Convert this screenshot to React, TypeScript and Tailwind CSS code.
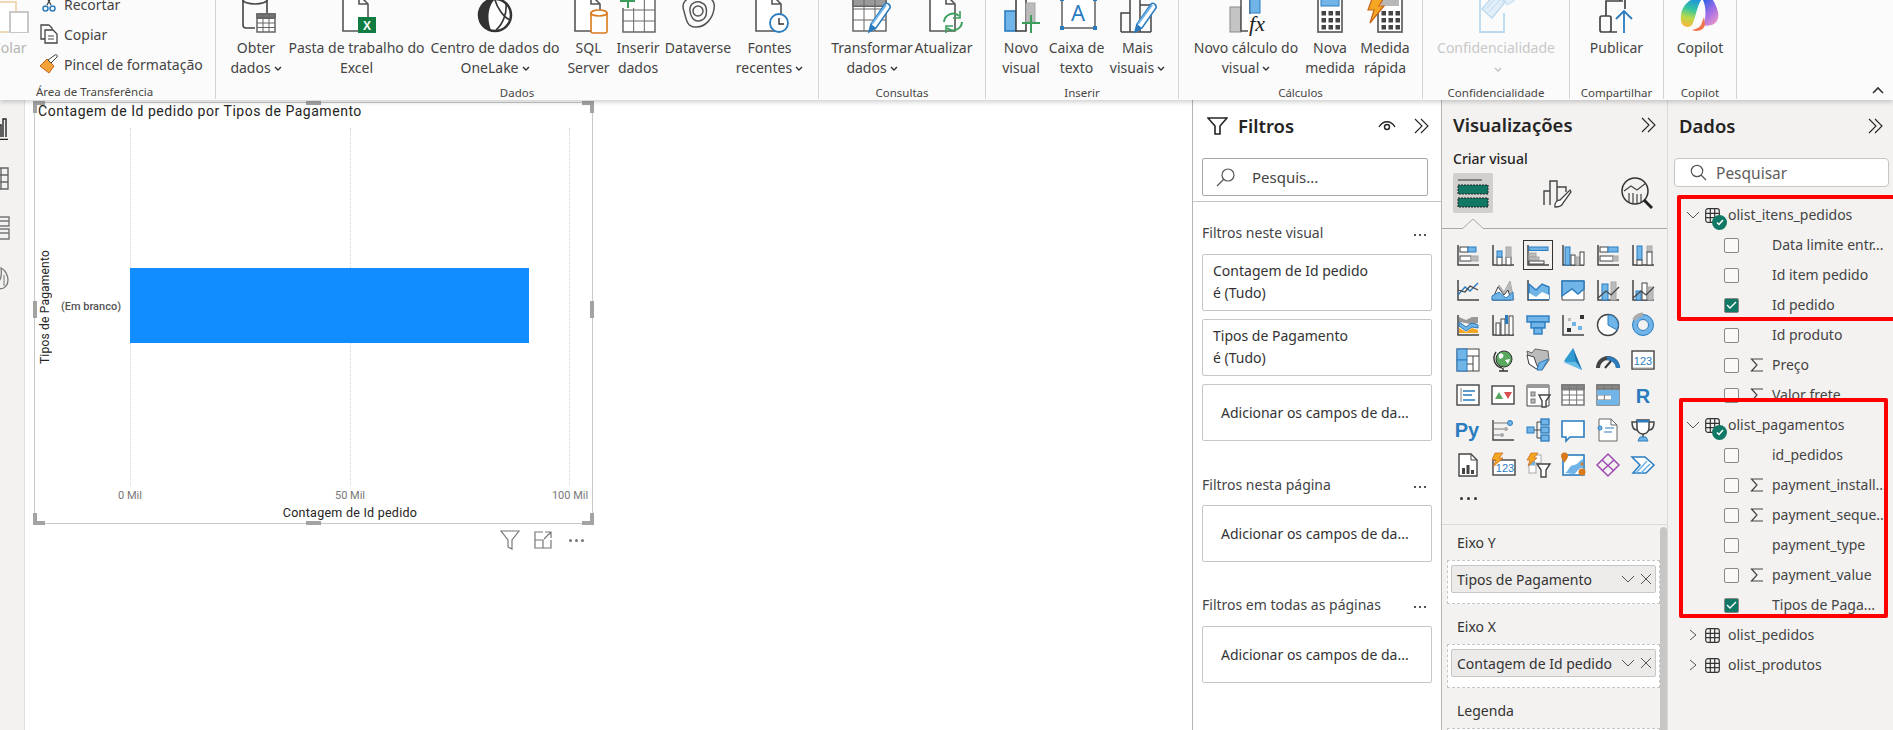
import React from "react";

const DK = "#444444";
const BL = "#2b7cbf";
const LB = "#71b4e8";
const GR = "#a8a8a8";

const Svg40 = ({ children }: { children: React.ReactNode }) => (
	<svg width="40" height="40" viewBox="0 0 40 40" fill="none" className="block overflow-visible">
		{children}
	</svg>
);

const Grid = ({ x, y, w, h, c, r, color = "#666", head }: { x: number; y: number; w: number; h: number; c: number; r: number; color?: string; head?: string }) => (
	<g stroke={color} strokeWidth="1.5">
		<rect x={x} y={y} width={w} height={h} fill="#fff" />
		{head && <rect x={x} y={y} width={w} height={h / (r + 1)} fill={head} />}
		{Array.from({ length: c - 1 }).map((_, i) => (
			<path key={i} d={`M${x + (w * (i + 1)) / c} ${y}V${y + h}`} strokeWidth="1" />
		))}
		{Array.from({ length: r - 1 }).map((_, i) => (
			<path key={i} d={`M${x} ${y + (h * (i + 1)) / r}H${x + w}`} strokeWidth="1" />
		))}
	</g>
);

const Doc = () => <path d="M6 2H22L31 11V38H6Z M22 2V11H31" stroke="#555" strokeWidth="1.6" fill="#fff" />;

const Pen = () => (
	<g>
		<path d="M17 39L19 31L33 11C35 9 39 12 38 15L24 35Z" fill="#fff" stroke={BL} strokeWidth="1.6" />
		<path d="M17 39L19 31L24 35Z" fill={BL} />
		<path d="M20 31L34 12" stroke={LB} strokeWidth="2" />
	</g>
);

const IconObter = () => (
	<Svg40>
		<path d="M7 7V32a3 3 0 0 0 3 3H19M31 7V20" stroke={DK} strokeWidth="1.6" />
		<ellipse cx="19" cy="7" rx="12" ry="4" stroke={DK} strokeWidth="1.6" />
		<Grid x={21} y={21} w={18} h={18} c={3} r={4} head="#777" />
	</Svg40>
);
const IconExcel = () => (
	<Svg40>
		<Doc />
		<rect x="21" y="24" width="18" height="16" fill="#107c41" />
		<text x="30" y="37" textAnchor="middle" fontSize="12" fontWeight="700" fill="#fff" fontFamily="Liberation Sans">X</text>
	</Svg40>
);
const IconOneLake = () => (
	<Svg40>
		<circle cx="20" cy="22" r="16" fill="#fff" stroke="#333" strokeWidth="2.5" />
		<path d="M5 26C2 16 10 6 20 6C14 12 11 24 16 37C11 36 7 32 5 26Z" fill="#333" />
		<path d="M20 7C22 14 28 24 35 27M31 11C32 20 28 31 21 37" stroke="#333" strokeWidth="1.6" />
	</Svg40>
);
const IconSql = () => (
	<Svg40>
		<Doc />
		<rect x="22" y="19" width="16" height="21" rx="2" fill="#fff" stroke="#d97a1f" strokeWidth="1.6" />
		<ellipse cx="30" cy="20" rx="8" ry="3" fill="#fff" stroke="#d97a1f" strokeWidth="1.6" />
	</Svg40>
);
const IconInserir = () => (
	<Svg40>
		<Grid x={5} y={6} w={32} h={33} c={3} r={3} />
		<rect x="1" y="3" width="16" height="12" fill="#fbfbfb" />
		<path d="M10 0V15M2 8H17" stroke="#3b9e5a" strokeWidth="2" />
	</Svg40>
);
const IconDataverse = () => (
	<Svg40>
		<path d="M6 18C2 8 12 2 20 5C28 0 38 6 36 16C35 24 28 35 17 34C9 34 8 26 6 18Z" stroke="#555" strokeWidth="1.5" />
		<path d="M12 18C11 10 19 7 24 10C30 12 30 24 24 27C18 30 13 26 12 18Z" stroke="#555" strokeWidth="1.5" />
		<circle cx="20" cy="18" r="5" stroke="#555" strokeWidth="1.5" />
	</Svg40>
);
const IconFontes = () => (
	<Svg40>
		<Doc />
		<circle cx="29" cy="30" r="9" fill="#fff" stroke={BL} strokeWidth="1.8" />
		<path d="M29 25V31H34" stroke="#333" strokeWidth="1.4" />
	</Svg40>
);
const IconTransformar = () => (
	<Svg40>
		<Grid x={1} y={5} w={33} h={33} c={3} r={3} head="#9a9a9a" />
		<Pen />
	</Svg40>
);
const IconAtualizar = () => (
	<Svg40>
		<Doc />
		<path d="M20 29A9 9 0 0 1 35 23M38 29A9 9 0 0 1 23 35" fill="none" stroke="#3b9e5a" strokeWidth="2" />
		<path d="M36 18V25H29M22 40V33H29" fill="none" stroke="#3b9e5a" strokeWidth="1.6" />
	</Svg40>
);
const IconNovoVisual = () => (
	<Svg40>
		<rect x="4" y="18" width="11" height="20" fill={LB} stroke={BL} strokeWidth="1.6" />
		<rect x="15" y="4" width="10" height="34" fill="#fff" stroke={DK} strokeWidth="1.6" />
		<rect x="25" y="10" width="9" height="19" fill="#bbb" stroke={GR} />
		<path d="M30 22V40M21 30H39" stroke="#3b9e5a" strokeWidth="2" />
	</Svg40>
);
const IconCaixa = () => (
	<Svg40>
		<rect x="5" y="6" width="33" height="29" fill="#fff" stroke="#555" strokeWidth="1.4" />
		<rect x="3" y="4" width="4" height="4" fill={BL} />
		<rect x="36" y="4" width="4" height="4" fill={BL} />
		<rect x="3" y="33" width="4" height="4" fill={BL} />
		<rect x="36" y="33" width="4" height="4" fill={BL} />
		<text x="21" y="28" textAnchor="middle" fontSize="22" fill={BL} fontFamily="Noto Sans">A</text>
	</Svg40>
);
const IconMais = () => (
	<Svg40>
		<path d="M3 39V20H12V39M12 39V5H22V39M22 39V12H33V39M3 39H33" stroke={DK} strokeWidth="1.5" />
		<Pen />
	</Svg40>
);
const IconCalculo = () => (
	<Svg40>
		<rect x="4" y="14" width="11" height="25" fill="#c4c4c4" stroke="#8a8a8a" />
		<rect x="15" y="2" width="9" height="36" fill="#fff" stroke={DK} strokeWidth="1.4" />
		<rect x="24" y="4" width="10" height="16" fill={LB} stroke={BL} />
		<rect x="22" y="21" width="18" height="19" fill="#fbfbfb" />
		<text x="31" y="38" textAnchor="middle" fontSize="22" fontStyle="italic" fill="#222" fontFamily="Liberation Serif">fx</text>
	</Svg40>
);
const Keys = ({ x, y }: { x: number; y: number }) => (
	<g fill="#444">
		{[0, 1, 2].map((r) =>
			[0, 1, 2].map((c) => <rect key={`${r}${c}`} x={x + c * 7} y={y + r * 7} width="4.5" height="4.5" />)
		)}
	</g>
);
const IconMedida = () => (
	<Svg40>
		<rect x="8" y="1" width="24" height="38" fill="#fff" stroke="#666" strokeWidth="1.8" />
		<rect x="11" y="6" width="18" height="7" fill={LB} stroke={BL} />
		<Keys x={11.5} y={18} />
	</Svg40>
);
const IconRapida = () => (
	<Svg40>
		<rect x="13" y="1" width="24" height="38" fill="#fff" stroke="#666" strokeWidth="1.8" />
		<rect x="16" y="6" width="18" height="7" fill="#b8b8b8" />
		<Keys x={16.5} y={18} />
		<path d="M8 3H20L14 13H19L5 30L9 17H3Z" fill="#f5a623" stroke="#c8641a" strokeWidth="1.2" />
	</Svg40>
);
const IconConfid = () => (
	<Svg40>
		<path d="M4 2V39H28V20" stroke="#bcd9ee" strokeWidth="1.8" fill="#fbfbfb" />
		<path d="M6 16L19 1L29 9L16 25Z" fill="#e3eff8" stroke="#bcd9ee" strokeWidth="1.4" />
		<path d="M10 16L21 4M13 19L24 7" stroke="#bcd9ee" />
		<path d="M26 2L38 -1V8L31 12Z" fill="#e3eff8" stroke="#bcd9ee" />
	</Svg40>
);
const IconPublicar = () => (
	<Svg40>
		<rect x="3" y="23" width="11" height="16" rx="2" stroke={DK} strokeWidth="1.7" />
		<path d="M9 23V8H23V2M14 39H20M28 2V16M14 8H26" stroke={DK} strokeWidth="1.7" />
		<path d="M27 40V18M19 26L27 18L35 26" stroke={BL} strokeWidth="1.8" />
	</Svg40>
);
const IconCopilot = () => (
	<Svg40>
		<defs>
			<linearGradient id="cp1" x1="0.6" y1="0" x2="0.4" y2="1">
				<stop offset="0" stopColor="#1f8fe0" />
				<stop offset="0.4" stopColor="#37c6a0" />
				<stop offset="0.7" stopColor="#b9d94a" />
				<stop offset="1" stopColor="#f5b83b" />
			</linearGradient>
			<linearGradient id="cp2" x1="0.2" y1="0" x2="0.8" y2="1">
				<stop offset="0" stopColor="#2a62e8" />
				<stop offset="0.5" stopColor="#a06ee6" />
				<stop offset="1" stopColor="#ef9ac8" />
			</linearGradient>
		</defs>
		<path d="M8 9C12 5 20 4 22 6C18 10 16 22 13 30C11 36 2 35 1 28C0 20 3 13 8 9Z" fill="url(#cp1)" />
		<path d="M22 5H29C32 5 34 8 36 13C39 20 40 27 34 31C30 33 26 33 23 32C26 26 27 14 22 5Z" fill="url(#cp2)" />
		<path d="M12 37C17 39 23 38 25 32L24 24L21 32C19 35 16 36 12 37Z" fill="#f2744b" />
		<path d="M18 29L23 14" stroke="#fff" strokeWidth="2.5" />
	</Svg40>
);

const Caret = ({ color = "#333" }: { color?: string }) => (
	<svg width="8" height="6" viewBox="0 0 8 6" fill="none" className="inline-block ml-[3px]">
		<path d="M1 1L4 4L7 1" stroke={color} strokeWidth="1.4" />
	</svg>
);

const RibbonButton = ({ width, icon, lines, caret }: { width: string; icon: React.ReactNode; lines: string[]; caret?: boolean }) => (
	<div className={`${width} flex flex-col items-center justify-end shrink-0`}>
		<div className="mb-[5px]">{icon}</div>
		{lines.map((l, i) => (
			<div key={i} className="h-[20px] leading-[20px] whitespace-nowrap text-[14px] text-[#444]">
				{l}
				{caret && i === lines.length - 1 && <Caret />}
			</div>
		))}
	</div>
);

const RibbonGroup = ({ width, padding, label, children }: { width: string; padding: string; label: string; children: React.ReactNode }) => (
	<div className={`${width} shrink-0 flex flex-col border-r border-[#d4d4d4] h-[99px]`}>
		<div className={`${padding} h-[84px] pb-[6px] flex items-end`}>{children}</div>
		<div className="text-center text-[11.5px] leading-[18px] text-[#484644] whitespace-nowrap">{label}</div>
	</div>
);

const Ribbon = () => (
	<div className="relative z-10 h-[100px] bg-[#fbfbfb] flex overflow-hidden shadow-[0_2px_5px_rgba(0,0,0,0.2)] shrink-0">
		<div className="w-[216px] shrink-0 flex flex-col border-r border-[#d4d4d4] h-[99px]">
			<div className="h-[84px] flex">
				<div className="w-[29px] shrink-0 flex flex-col justify-end overflow-hidden pb-[26px]">
					<svg width="29" height="33" viewBox="0 0 29 33" fill="none" className="block mb-[5px]">
						<rect x="-8" y="2" width="24" height="30" fill="#fff" stroke="#f0d9b5" strokeWidth="2" />
						<rect x="10" y="12" width="18" height="21" fill="#fff" stroke="#c8c8c8" strokeWidth="2" />
					</svg>
					<div className="text-[14px] leading-[20px] text-[#b4b4b4] whitespace-nowrap -ml-[8px]">Colar</div>
				</div>
				<div className="flex flex-col -mt-[6px] ml-[10px] gap-[10px]">
					<div className="flex items-center h-[20px] gap-[5px] text-[14px] text-[#444]">
						<svg width="20" height="20" viewBox="0 0 20 20" fill="none">
							<path d="M7 2L12 11M13 2L8 11" stroke="#444" strokeWidth="1.3" />
							<circle cx="6.5" cy="14.5" r="2.5" stroke={BL} strokeWidth="1.5" />
							<circle cx="13.5" cy="14.5" r="2.5" stroke={BL} strokeWidth="1.5" />
						</svg>
						Recortar
					</div>
					<div className="flex items-center h-[20px] gap-[5px] text-[14px] text-[#444]">
						<svg width="20" height="20" viewBox="0 0 20 20" fill="none">
							<path d="M10 1H2V15H6M10 1L13 4V6" stroke="#444" strokeWidth="1.3" />
							<path d="M6 6H14L18 10V19H6Z" fill="#fff" stroke="#444" strokeWidth="1.3" />
							<path d="M9 12H15M9 15H15" stroke="#444" />
						</svg>
						Copiar
					</div>
					<div className="flex items-center h-[20px] gap-[5px] text-[14px] text-[#444] whitespace-nowrap">
						<svg width="20" height="20" viewBox="0 0 20 20" fill="none">
							<path d="M1 12L8 5L15 12L10 19Z" fill="#f3a33a" stroke="#c8641a" />
							<path d="M9 6L12 9L18 3C19 1 17 0 16 1Z" fill="#fff" stroke="#444" />
						</svg>
						Pincel de formatação
					</div>
				</div>
			</div>
			<div className="text-center text-[11.5px] leading-[16px] text-[#484644] -ml-[26px]">Área de Transferência</div>
		</div>
		<RibbonGroup width="w-[603px]" padding="pl-[10px]" label="Dados">
			<RibbonButton width="w-[60px]" icon={<IconObter />} lines={["Obter", "dados"]} caret />
			<RibbonButton width="w-[141px]" icon={<IconExcel />} lines={["Pasta de trabalho do", "Excel"]} />
			<RibbonButton width="w-[136px]" icon={<IconOneLake />} lines={["Centro de dados do", "OneLake"]} caret />
			<RibbonButton width="w-[51px]" icon={<IconSql />} lines={["SQL", "Server"]} />
			<RibbonButton width="w-[48px]" icon={<IconInserir />} lines={["Inserir", "dados"]} />
			<RibbonButton width="w-[72px]" icon={<IconDataverse />} lines={["Dataverse", ""]} />
			<RibbonButton width="w-[71px]" icon={<IconFontes />} lines={["Fontes", "recentes"]} caret />
		</RibbonGroup>
		<RibbonGroup width="w-[167px]" padding="pl-[11px]" label="Consultas">
			<RibbonButton width="w-[84px]" icon={<IconTransformar />} lines={["Transformar", "dados"]} caret />
			<RibbonButton width="w-[59px]" icon={<IconAtualizar />} lines={["Atualizar", ""]} />
		</RibbonGroup>
		<RibbonGroup width="w-[193px]" padding="pl-[10px]" label="Inserir">
			<RibbonButton width="w-[50px]" icon={<IconNovoVisual />} lines={["Novo", "visual"]} />
			<RibbonButton width="w-[61px]" icon={<IconCaixa />} lines={["Caixa de", "texto"]} />
			<RibbonButton width="w-[61px]" icon={<IconMais />} lines={["Mais", "visuais"]} caret />
		</RibbonGroup>
		<RibbonGroup width="w-[244px]" padding="pl-[13px]" label="Cálculos">
			<RibbonButton width="w-[108px]" icon={<IconCalculo />} lines={["Novo cálculo do", "visual"]} caret />
			<RibbonButton width="w-[60px]" icon={<IconMedida />} lines={["Nova", "medida"]} />
			<RibbonButton width="w-[50px]" icon={<IconRapida />} lines={["Medida", "rápida"]} />
		</RibbonGroup>
		<RibbonGroup width="w-[147px]" padding="" label="Confidencialidade">
			<div className="w-full flex flex-col items-center justify-end">
				<div className="mb-[5px]">
					<IconConfid />
				</div>
				<div className="h-[20px] leading-[20px] text-[14px] text-[#c8c8c8]">Confidencialidade</div>
				<div className="h-[20px] leading-[20px]">
					<Caret color="#c0c0c0" />
				</div>
			</div>
		</RibbonGroup>
		<RibbonGroup width="w-[94px]" padding="" label="Compartilhar">
			<RibbonButton width="w-full" icon={<IconPublicar />} lines={["Publicar", ""]} />
		</RibbonGroup>
		<RibbonGroup width="w-[73px]" padding="" label="Copilot">
			<RibbonButton width="w-full" icon={<IconCopilot />} lines={["Copilot", ""]} />
		</RibbonGroup>
		<div className="flex-1 flex justify-end items-end pb-[6px] pr-[9px]">
			<svg width="12" height="8" viewBox="0 0 12 8" fill="none">
				<path d="M1 7L6 2L11 7" stroke="#333" strokeWidth="1.6" />
			</svg>
		</div>
	</div>
);

const Rail = () => (
	<div className="w-[25px] shrink-0 bg-[#f3f2f1] border-r border-[#e1dfdd] overflow-hidden flex flex-col pt-[16px] gap-[26px]">
		<svg width="24" height="24" viewBox="0 0 24 24" fill="none" className="-ml-[16px]">
			<path d="M14 21V9H17V21M19 21V3H22V21M12 23.500H24" stroke="#222" strokeWidth="1.4" />
		</svg>
		<svg width="24" height="24" viewBox="0 0 24 24" fill="none" className="-ml-[15px]">
			<path d="M1 2H23V23H1ZM1 9H23M1 16H23M8 2V23M16 2V23" stroke="#666" strokeWidth="1.4" />
		</svg>
		<svg width="24" height="24" viewBox="0 0 24 24" fill="none" className="-ml-[14px]">
			<path d="M13 1H23V10H13ZM13 5H23M13 13H23V23H13ZM13 17H23M2 10H10V15H2Z" stroke="#777" strokeWidth="1.4" />
		</svg>
		<svg width="24" height="24" viewBox="0 0 24 24" fill="none" className="-ml-[15px]">
			<path d="M16 2C20 4 23 9 23 14C23 19 20 23 14 23C10 22 9 19 12 17C16 15 17 8 16 2Z" stroke="#777" strokeWidth="1.3" />
			<path d="M19 9V20" stroke="#777" />
		</svg>
	</div>
);

const Handle = ({ className }: { className: string }) => <div className={`absolute bg-[#a3a3a3] ${className}`} />;

const BarChartVisual = () => (
	<div className="relative w-[559px] h-[422px] border border-[#c8c8c8] bg-white font-['Roboto',sans-serif]">
		<div className="pl-[3px] h-[25px] leading-[16px] text-[14px] tracking-[0.53px] text-[#252423] whitespace-nowrap">
			Contagem de Id pedido por Tipos de Pagamento
		</div>
		<div className="flex h-[358px]">
			<div className="w-[95px] shrink-0 flex items-center">
				<div className="w-[18px] ml-[1px] flex justify-center">
					<div className="[writing-mode:vertical-rl] rotate-180 text-[12px] leading-[14px] tracking-[0.2px] text-[#252423] whitespace-nowrap">
						Tipos de Pagamento
					</div>
				</div>
				<div className="flex-1 text-right pr-[9px] text-[11px] font-medium text-[#555] whitespace-nowrap">(Em branco)</div>
			</div>
			<div className="relative w-[440px] flex items-center pb-[3px]">
				<div className="absolute inset-0 flex justify-between">
					<div className="w-0 border-l border-dotted border-[#d4d4d4]" />
					<div className="w-0 border-l border-dotted border-[#d4d4d4]" />
					<div className="w-0 border-l border-dotted border-[#d4d4d4]" />
				</div>
				<div className="relative w-[399px] h-[75px] bg-[#118dff]" />
			</div>
		</div>
		<div className="flex justify-between w-[440px] ml-[95px] mt-[2px] text-[11px] leading-[16px] text-[#777]">
			{["0 Mil", "50 Mil", "100 Mil"].map((t) => (
				<div key={t} className="w-0 flex justify-center whitespace-nowrap">
					{t}
				</div>
			))}
		</div>
		<div className="w-[440px] ml-[95px] text-center text-[12.5px] leading-[18px] tracking-[0.25px] text-[#252423]">Contagem de Id pedido</div>

		<Handle className="-top-[2px] -left-[2px] w-[12px] h-[4px]" />
		<Handle className="-top-[2px] -left-[2px] w-[4px] h-[12px]" />
		<Handle className="-top-[2px] -right-[2px] w-[12px] h-[4px]" />
		<Handle className="-top-[2px] -right-[2px] w-[4px] h-[12px]" />
		<Handle className="-bottom-[2px] -left-[2px] w-[12px] h-[4px]" />
		<Handle className="-bottom-[2px] -left-[2px] w-[4px] h-[12px]" />
		<Handle className="-bottom-[2px] -right-[2px] w-[12px] h-[4px]" />
		<Handle className="-bottom-[2px] -right-[2px] w-[4px] h-[12px]" />
		<Handle className="-top-[2px] left-[271px] w-[15px] h-[4px]" />
		<Handle className="-bottom-[2px] left-[271px] w-[15px] h-[4px]" />
		<Handle className="top-[198px] -left-[2px] w-[4px] h-[17px]" />
		<Handle className="top-[198px] -right-[2px] w-[4px] h-[17px]" />
	</div>
);

const Canvas = () => (
	<div className="w-[1167px] shrink-0 bg-white pl-[9px] pt-[2px]">
		<BarChartVisual />
		<div className="w-[559px] flex justify-end items-center gap-[14px] mt-[6px] pr-[7px]">
			<svg width="20" height="20" viewBox="0 0 20 20" fill="none">
				<path d="M1 1H19L12 10V19L8 17V10Z" stroke="#777" strokeWidth="1.2" />
			</svg>
			<svg width="18" height="18" viewBox="0 0 18 18" fill="none">
				<path d="M9 1H1V17H17V9M1 9H9V17M11 1H17V7M17 1L10 8" stroke="#777" strokeWidth="1.2" />
			</svg>
			<div className="flex gap-[3px] w-[20px] justify-center">
				<div className="w-[3px] h-[3px] rounded-full bg-[#777]" />
				<div className="w-[3px] h-[3px] rounded-full bg-[#777]" />
				<div className="w-[3px] h-[3px] rounded-full bg-[#777]" />
			</div>
		</div>
	</div>
);

const DoubleChevron = () => (
	<svg width="16" height="16" viewBox="0 0 16 16" fill="none">
		<path d="M1 1L8 8L1 15M7 1L14 8L7 15" stroke="#252423" strokeWidth="1.1" />
	</svg>
);

const FilterCard = ({ lines }: { lines: string[] }) => (
	<div className="w-[230px] h-[57px] border border-[#c8c6c4] rounded-[2px] bg-white px-[10px] pt-[5px] text-[14px] leading-[22px] text-[#333] whitespace-nowrap">
		{lines.map((l) => (
			<div key={l}>{l}</div>
		))}
	</div>
);

const EmptyCard = () => (
	<div className="w-[230px] h-[57px] border border-[#c8c6c4] rounded-[2px] bg-white flex items-center pl-[18px] text-[14px] text-[#333] whitespace-nowrap">
		Adicionar os campos de da...
	</div>
);

const SectionTitle = ({ title }: { title: string }) => (
	<div className="flex justify-between items-center h-[20px] pr-[6px] text-[14px] text-[#444] whitespace-nowrap">
		{title}
		<div className="flex gap-[3px] mt-[6px]">
			<div className="w-[2px] h-[2px] bg-[#555]" />
			<div className="w-[2px] h-[2px] bg-[#555]" />
			<div className="w-[2px] h-[2px] bg-[#555]" />
		</div>
	</div>
);

const FiltersPane = () => (
	<div className="w-[250px] shrink-0 bg-white border-l border-r border-[#b5b5b5] flex flex-col">
		<div className="h-[58px] flex items-center pl-[14px] pr-[11px] pb-[6px]">
			<svg width="21" height="18" viewBox="0 0 21 18" fill="none">
				<path d="M1 1H20L13 9V17H8V9Z" stroke="#252423" strokeWidth="1.6" />
			</svg>
			<div className="ml-[10px] text-[18.5px] font-semibold text-[#252423]">Filtros</div>
			<svg width="18" height="12" viewBox="0 0 18 12" fill="none" className="ml-auto mr-[18px]">
				<path d="M1 7C5 0 13 0 17 7" stroke="#252423" strokeWidth="1.4" />
				<circle cx="9" cy="7" r="2.5" stroke="#252423" strokeWidth="1.4" />
			</svg>
			<DoubleChevron />
		</div>
		<div className="mx-[9px] w-[226px] h-[38px] border border-[#a8a8a8] rounded-[2px] flex items-center pl-[13px]">
			<svg width="20" height="20" viewBox="0 0 20 20" fill="none">
				<circle cx="12" cy="8" r="6" stroke="#555" strokeWidth="1.2" />
				<path d="M8 12L1 19" stroke="#555" strokeWidth="1.2" />
			</svg>
			<div className="ml-[16px] text-[15px] text-[#444]">Pesquis...</div>
		</div>
		<div className="mt-[5px] border-b border-[#c8c6c4]" />
		<div className="px-[9px] pt-[20px]">
			<SectionTitle title="Filtros neste visual" />
			<div className="flex flex-col gap-[8px] mt-[12px]">
				<FilterCard lines={["Contagem de Id pedido", "é (Tudo)"]} />
				<FilterCard lines={["Tipos de Pagamento", "é (Tudo)"]} />
				<EmptyCard />
			</div>
			<div className="mt-[33px]">
				<SectionTitle title="Filtros nesta página" />
			</div>
			<div className="mt-[11px]">
				<EmptyCard />
			</div>
			<div className="mt-[32px]">
				<SectionTitle title="Filtros em todas as páginas" />
			</div>
			<div className="mt-[12px]">
				<EmptyCard />
			</div>
		</div>
	</div>
);

const ax = <path d="M2 2V22H23" stroke={DK} strokeWidth="1.5" />;
const t24 = (s: string, x = 12, y = 17, size = 10, fill = BL) => (
	<text x={x} y={y} textAnchor="middle" fontSize={size} fontWeight={size > 15 ? 700 : 400} fill={fill} fontFamily="Liberation Sans">
		{s}
	</text>
);
const w = "#ffffff";

const vizIcons: React.ReactNode[] = [
	<>{ax}<rect x="4" y="4" width="8" height="5" fill={w} stroke={DK} /><rect x="12" y="4" width="8" height="5" fill={LB} stroke={BL} /><rect x="4" y="13" width="11" height="5" fill={w} stroke={DK} /><rect x="15" y="13" width="7" height="5" fill="#bbb" stroke={GR} /></>,
	<>{ax}<rect x="6" y="14" width="5" height="8" fill={w} stroke={DK} /><rect x="6" y="8" width="5" height="6" fill={LB} stroke={BL} /><rect x="15" y="14" width="5" height="8" fill={w} stroke={DK} /><rect x="15" y="4" width="5" height="10" fill="#bbb" stroke={GR} /></>,
	<>{ax}<rect x="3" y="4" width="19" height="3.5" fill={LB} stroke={BL} /><rect x="3" y="10" width="7" height="3.5" fill="#bbb" stroke={GR} /><rect x="3" y="14" width="10" height="3" fill="#bbb" stroke={GR} /><rect x="3" y="18" width="15" height="3" fill={w} stroke={DK} /></>,
	<>{ax}<rect x="4" y="4" width="5" height="18" fill={LB} stroke={BL} /><rect x="10" y="12" width="4" height="10" fill={w} stroke={DK} /><rect x="15" y="14" width="4" height="8" fill="#bbb" stroke={GR} /><rect x="19" y="9" width="4" height="13" fill={w} stroke={DK} /></>,
	<>{ax}<rect x="4" y="4" width="8" height="5" fill={w} stroke={DK} /><rect x="12" y="4" width="10" height="5" fill={LB} stroke={BL} /><rect x="4" y="13" width="13" height="5" fill={w} stroke={DK} /><rect x="17" y="13" width="5" height="5" fill="#bbb" stroke={GR} /></>,
	<>{ax}<rect x="6" y="3" width="5" height="14" fill={LB} stroke={BL} /><rect x="6" y="17" width="5" height="5" fill={w} stroke={DK} /><rect x="16" y="3" width="5" height="6" fill="#bbb" stroke={GR} /><rect x="16" y="9" width="5" height="13" fill={w} stroke={DK} /></>,

	<>{ax}<path d="M2 17L9 9L14 13L22 5" stroke={BL} strokeWidth="1.4" /><path d="M2 12L9 14L14 8L22 12" stroke={DK} strokeWidth="1.2" /></>,
	<><path d="M1 22L8 7L13 14L19 3L23 22Z" fill="#bbb" stroke={GR} /><path d="M1 22L7 9L13 17L17 12L20 22Z" fill={w} stroke={DK} /><path d="M1 22V18L8 14L15 20L22 14V22Z" fill={LB} stroke={BL} /></>,
	<>{ax}<path d="M3 6L10 12L16 6L23 9V21H3Z" fill={LB} stroke={BL} strokeWidth="1.4" /><path d="M3 15L10 19L16 14L23 17V21H3Z" fill={w} /></>,
	<><path d="M1 3H23V22H1Z" fill={w} stroke={DK} strokeWidth="1" /><path d="M1 3H23V11L17 16L11 11L1 18Z" fill={LB} stroke={BL} strokeWidth="1.4" /></>,
	<>{ax}<rect x="6" y="6" width="6" height="16" fill={LB} stroke={BL} /><rect x="15" y="4" width="5" height="18" fill="#bbb" stroke={GR} /><path d="M2 20L10 13L15 17L23 9" stroke={DK} strokeWidth="1.3" /></>,
	<>{ax}<rect x="5" y="13" width="5" height="9" fill={LB} stroke={BL} /><rect x="11" y="5" width="5" height="17" fill={w} stroke={DK} /><rect x="17" y="9" width="5" height="13" fill="#bbb" stroke={GR} /><path d="M2 20L10 13L15 17L23 9" stroke={DK} strokeWidth="1.2" /></>,

	<>{ax}<path d="M3 4L10 7L16 4L22 4V10L16 12L10 10L3 9Z" fill="#999" /><path d="M3 9L10 14L16 10L22 12V15L16 14L10 18L3 13Z" fill={LB} stroke={BL} /><path d="M3 15L10 19L16 15L22 17V20H3Z" fill="#f5a623" /></>,
	<>{ax}<rect x="5" y="10" width="4" height="12" fill={w} stroke={DK} /><rect x="10" y="6" width="4" height="16" fill={w} stroke={DK} /><rect x="14" y="2" width="3" height="9" fill={BL} /><rect x="18" y="3" width="4" height="19" fill={w} stroke={DK} /></>,
	<><rect x="1" y="3" width="22" height="6" fill={LB} stroke={BL} strokeWidth="1.4" /><rect x="5" y="9" width="14" height="6" fill={LB} stroke={BL} strokeWidth="1.4" /><rect x="8" y="15" width="8" height="6" fill={LB} stroke={BL} strokeWidth="1.4" /></>,
	<>{ax}<rect x="6" y="15" width="4" height="4" fill="#333" /><rect x="11" y="9" width="4" height="4" fill={LB} /><rect x="17" y="13" width="4" height="4" fill={LB} /><rect x="19" y="2" width="4" height="4" fill="#333" /><rect x="7" y="5" width="3" height="3" fill="#bbb" /></>,
	<><circle cx="12" cy="12" r="10.5" fill={w} stroke={DK} strokeWidth="1.4" /><path d="M12 2A10 10 0 0 1 21 17L12 12Z" fill={LB} stroke={BL} /></>,
	<><circle cx="12" cy="12" r="8" fill="none" stroke={LB} strokeWidth="5" /><circle cx="12" cy="12" r="10.5" stroke={BL} /><circle cx="12" cy="12" r="5.5" stroke={BL} fill="#f3f2f1" /><path d="M12 1.5A10.5 10.5 0 0 0 3 7" stroke="#aaa" strokeWidth="4" /></>,

	<><rect x="1" y="1" width="22" height="22" fill={w} stroke={DK} /><rect x="1" y="1" width="10" height="11" fill={LB} stroke={BL} /><rect x="1" y="12" width="10" height="11" fill={LB} stroke={BL} /><path d="M11 8H23M17 8V23M11 16H17" stroke={DK} /></>,
	<><circle cx="13" cy="11" r="8" fill="#5aa85f" stroke="#333" /><path d="M8 6C12 4 14 8 11 10C9 12 7 10 8 6ZM14 12L19 11L17 16Z" fill="#fff" /><path d="M5 4C1 10 3 18 11 20M12 20V23M8 23H17" stroke="#333" strokeWidth="1.4" /></>,
	<><path d="M1 3L6 5L9 1L22 3L23 12L16 22L9 20L3 16Z" fill="#bbb" stroke="#666" /><path d="M1 7L8 9L10 15L13 22L9 20L3 16Z" fill={w} stroke="#444" /><path d="M13 15L22 11L16 22L11 22Z" fill={LB} stroke={BL} /></>,
	<><path d="M12 0L21 22L3 13Z" fill="#2f9bd1" /><path d="M12 0L15 14L21 22Z" fill="#1f6fa8" /><path d="M2 14L15 14L21 22Z" fill="#66bde8" /></>,
	<><path d="M2 20A10 10 0 0 1 22 20" stroke={DK} strokeWidth="4" fill="none" /><path d="M11 10.500A10 10 0 0 1 22 20" stroke={BL} strokeWidth="4" fill="none" /><path d="M9 20L15 13" stroke="#333" strokeWidth="2" /></>,
	<><rect x="1" y="3" width="22" height="18" fill={w} stroke={DK} strokeWidth="1.4" />{t24("123", 12, 16.5, 11)}<path d="M2 20H22" stroke={GR} /></>,

	<><rect x="1" y="2" width="22" height="20" fill={w} stroke={DK} strokeWidth="1.4" /><path d="M5 5V19" stroke={GR} strokeWidth="1.5" /><path d="M7 8H19M7 12H16M7 17H19" stroke={BL} strokeWidth="1.5" /></>,
	<><rect x="1" y="3" width="22" height="18" fill={w} stroke={DK} strokeWidth="1.4" /><path d="M4 16L8 9L12 16Z" fill="#5aa85f" /><path d="M13 9H21L17 16Z" fill="#d94f4f" /></>,
	<><path d="M1 2H23V23H1Z" fill={w} stroke={DK} /><rect x="1" y="2" width="22" height="3" fill="#999" /><rect x="5" y="9" width="4" height="4" fill="#bbb" stroke="#777" /><rect x="5" y="16" width="4" height="4" fill="#bbb" stroke="#777" /><path d="M13 12H24L20 18V24H16V18Z" fill={w} stroke={DK} strokeWidth="1.4" /></>,
	<Grid x={1} y={2} w={22} h={20} c={3} r={4} head="#888" color="#777" />,
	<><Grid x={1} y={2} w={22} h={20} c={3} r={4} head="#888" color="#777" /><rect x="1" y="7" width="14" height="5" fill={LB} /><rect x="15" y="7" width="8" height="15" fill={LB} /><rect x="1" y="17" width="14" height="5" fill={LB} /></>,
	<>{t24("R", 12, 20, 20, BL)}</>,

	<>{t24("Py", 11, 19, 20, BL)}</>,
	<><path d="M2 2V22H23" stroke={DK} strokeWidth="1.4" /><path d="M2 5H17M2 11H13M2 17H9" stroke="#777" strokeWidth="1" /><circle cx="19" cy="5" r="2.5" fill={LB} stroke={BL} /><circle cx="15" cy="11" r="2" fill={GR} /><circle cx="11" cy="17" r="2" fill={GR} /></>,
	<><rect x="1" y="9" width="7" height="6" fill={LB} stroke={BL} /><rect x="15" y="1" width="8" height="6" fill={LB} stroke={BL} strokeWidth="1.3" /><rect x="15" y="9" width="8" height="6" fill={LB} stroke={BL} strokeWidth="1.3" /><rect x="15" y="17" width="8" height="6" fill={LB} stroke={BL} strokeWidth="1.3" /><path d="M8 12H15M11 4V20H15M11 4H15" stroke={DK} /></>,
	<path d="M1 3H23V19H9L5 23V19H1Z" fill={w} stroke={BL} strokeWidth="1.6" />,
	<><path d="M3 1H15L21 7V23H3Z" fill={w} stroke="#666" /><path d="M15 1V7H21" stroke="#666" /><circle cx="4" cy="10" r="2" fill={LB} stroke={BL} /><path d="M9 10H18M8 14H16" stroke={BL} /></>,
	<><path d="M6 2H18V10A6 6 0 0 1 6 10Z" fill={w} stroke={DK} strokeWidth="1.5" /><path d="M6 4H1C1 9 3 12 6 12M18 4H23C23 9 21 12 18 12M12 16V19" stroke={DK} strokeWidth="1.5" /><rect x="6" y="2" width="12" height="2.5" fill={BL} /><path d="M7 23L9 19H15L17 23Z" fill={LB} stroke={BL} /></>,

	<><path d="M3 1H15L21 7V23H3Z" fill={w} stroke={DK} strokeWidth="1.4" /><path d="M15 1V7H21" stroke={DK} /><rect x="6" y="15" width="3" height="6" fill={DK} /><rect x="10.5" y="12" width="3" height="9" fill={DK} /><rect x="15" y="17" width="3" height="4" fill={DK} /></>,
	<><rect x="2" y="7" width="22" height="15" fill={w} stroke={DK} strokeWidth="1.4" />{t24("123", 14, 19, 11)}<path d="M4 0H12L8 5H12L2 14L5 7H1Z" fill="#f5a623" stroke="#c8641a" strokeWidth="0.7" /></>,
	<><rect x="7" y="2" width="8" height="8" fill={w} stroke={GR} /><rect x="3" y="12" width="7" height="8" fill={w} stroke={GR} /><rect x="3" y="8" width="6" height="4" fill={LB} /><path d="M11 11H24L20 17V24H15V17Z" fill={w} stroke={DK} strokeWidth="1.4" /><path d="M5 0H12L8 5H11L2 13L4 7H1Z" fill="#f5a623" stroke="#c8641a" strokeWidth="0.7" /></>,
	<><rect x="2" y="2" width="21" height="20" fill={w} stroke={BL} strokeWidth="1.6" /><path d="M4 20C8 18 8 12 13 12C16 12 18 8 22 6V15C17 14 16 20 13 21Z" fill={LB} /><path d="M0 3A3.5 3.5 0 0 1 7 3C7 6 4 8 3.5 10C3 8 0 6 0 3Z" fill="#d97a1f" /><circle cx="21" cy="19" r="3.5" fill="#d97a1f" /><circle cx="21" cy="11" r="1.5" fill="#d97a1f" /></>,
	<><path d="M12 1L23 12L12 23L1 12Z" fill="none" stroke="#9d4db3" strokeWidth="1.5" /><path d="M6 7L18 18M18 7L6 18" stroke="#9d4db3" strokeWidth="1.5" /></>,
	<><path d="M1 4H14L23 12L15 20H2L9 12Z" fill={w} stroke={BL} strokeWidth="1.5" /><path d="M5 20L16 8M10 20L19 11" stroke={LB} strokeWidth="1.5" /></>,
];

const VizPane = () => (
	<div className="w-[226px] shrink-0 bg-[#f3f2f1] border-r border-[#dcdad8] flex flex-col">
		<div className="h-[52px] flex items-center justify-between pl-[11px] pr-[10px] pb-[2px]">
			<div className="text-[18.5px] font-semibold text-[#252423]">Visualizações</div>
			<DoubleChevron />
		</div>
		<div className="pl-[11px] h-[14px] leading-[14px] text-[14px] font-medium text-[#252423]">Criar visual</div>
		<div className="flex items-center pl-[11px] mt-[7px] h-[40px]">
			<div className="w-[40px] h-[40px] bg-[#d2d0ce] rounded-[2px] flex items-center justify-center">
				<svg width="32" height="30" viewBox="0 0 32 30" fill="none">
					<path d="M1 2H25" stroke="#333" />
					<rect x="1" y="7" width="30" height="9" fill="#117865" stroke="#222" strokeDasharray="2 1" />
					<rect x="1" y="20" width="30" height="9" fill="#117865" stroke="#222" strokeDasharray="2 1" />
				</svg>
			</div>
			<svg width="30" height="30" viewBox="0 0 30 30" fill="none" className="ml-[49px]">
				<path d="M2 27V13H8V27M8 13V3H15V24M15 9H24V14" stroke="#444" strokeWidth="1.4" />
				<path d="M13 29C12 24 16 22 18 22L28 12L29 14L21 25C20 28 16 29 13 29Z" fill="#fff" stroke="#444" strokeWidth="1.3" />
			</svg>
			<svg width="32" height="32" viewBox="0 0 32 32" fill="none" className="ml-[49px]">
				<circle cx="14" cy="14" r="13" stroke="#333" strokeWidth="1.5" />
				<path d="M3 14L10 9L16 13L25 6M8 16V25M12 16V27M16 17V27M20 17V25" stroke="#444" strokeWidth="1.2" />
				<path d="M23 23L31 31" stroke="#222" strokeWidth="3" />
			</svg>
		</div>
		<div className="relative mt-[15px] border-b border-[#a8a8a8]">
			<svg width="22" height="10" viewBox="0 0 22 10" className="absolute left-[20px] -top-[9px]">
				<path d="M0 10L11 0L22 10Z" fill="#f3f2f1" />
				<path d="M0 10L11 0L22 10" fill="none" stroke="#a8a8a8" />
			</svg>
		</div>
		<div className="grid grid-cols-[repeat(6,35px)] auto-rows-[35px] pl-[8px] mt-[8px]">
			{vizIcons.map((icon, i) => (
				<div key={i} className="flex items-center justify-center">
					<div className={i === 2 ? "w-[30px] h-[30px] border border-[#333] flex items-center justify-center" : "w-[30px] h-[30px] flex items-center justify-center"}>
						<svg width="24" height="24" viewBox="0 0 24 24" fill="none" className="overflow-visible">
							{icon}
						</svg>
					</div>
				</div>
			))}
		</div>
		<div className="pl-[18px] h-[42px] pt-[15px] flex gap-[4px]">
			<div className="w-[3px] h-[3px] bg-[#333] rounded-full" />
			<div className="w-[3px] h-[3px] bg-[#333] rounded-full" />
			<div className="w-[3px] h-[3px] bg-[#333] rounded-full" />
		</div>
		<div className="flex-1 border-t border-[#dcdad8] flex overflow-hidden">
			<div className="w-[218px] pl-[5px] pr-0 pt-[8px] text-[14px] text-[#333]">
				<div className="pl-[10px] h-[20px] leading-[20px]">Eixo Y</div>
				<Well label="Tipos de Pagamento" />
				<div className="pl-[10px] h-[20px] leading-[20px] mt-[13px]">Eixo X</div>
				<Well label="Contagem de Id pedido" />
				<div className="pl-[10px] h-[20px] leading-[20px] mt-[13px]">Legenda</div>
				<div className="mt-[7px] h-[44px] border border-dashed border-[#c8c6c4] bg-white" />
			</div>
			<div className="w-[7px] mt-[2px] bg-[#c8c6c4] rounded-t-[4px]" />
		</div>
	</div>
);

const Well = ({ label }: { label: string }) => (
	<div className="mt-[7px] h-[44px] border border-dashed border-[#c8c6c4] bg-white px-[3px] pt-[4px]">
		<div className="h-[28px] border border-[#c8c6c4] rounded-[2px] bg-[#edebe9] flex items-center pl-[5px] pr-[4px] whitespace-nowrap">
			{label}
			<svg width="14" height="8" viewBox="0 0 14 8" fill="none" className="ml-auto">
				<path d="M1 1L7 7L13 1" stroke="#555" />
			</svg>
			<svg width="10" height="10" viewBox="0 0 10 10" fill="none" className="ml-[6px]">
				<path d="M0 0L10 10M10 0L0 10" stroke="#555" />
			</svg>
		</div>
	</div>
);

const Checkbox = ({ checked }: { checked?: boolean }) =>
	checked ? (
		<div className="w-[15px] h-[15px] rounded-[2px] bg-[#117865] border border-[#8a8886] flex items-center justify-center shrink-0">
			<svg width="11" height="9" viewBox="0 0 11 9" fill="none">
				<path d="M1 4L4 7L10 1" stroke="#fff" strokeWidth="1.4" />
			</svg>
		</div>
	) : (
		<div className="w-[15px] h-[15px] rounded-[2px] bg-[#faf9f8] border border-[#8a8886] shrink-0" />
	);

const FieldRow = ({ label, sigma, checked }: { label: string; sigma?: boolean; checked?: boolean }) => (
	<div className="h-[30px] flex items-center pl-[56px] text-[14px] text-[#444] whitespace-nowrap">
		<Checkbox checked={checked} />
		<div className="w-[33px] flex justify-center pl-[3px] shrink-0">
			{sigma && (
				<svg width="14" height="14" viewBox="0 0 14 14" fill="none">
					<path d="M13 1H1.5L7 7L1.5 13H13" stroke="#444" strokeWidth="1.2" />
				</svg>
			)}
		</div>
		<span className="-translate-y-px">{label}</span>
	</div>
);

const TableRow = ({ name, open, active }: { name: string; open?: boolean; active?: boolean }) => (
	<div className="h-[30px] flex items-center pl-[19px] text-[14px] text-[#444] whitespace-nowrap">
		<svg width="12" height="12" viewBox="0 0 12 12" fill="none" className="shrink-0">
			{open ? <path d="M0 3L6 9L12 3" stroke="#555" /> : <path d="M3 1L9 6L3 11" stroke="#555" />}
		</svg>
		<div className="relative w-[15px] h-[15px] ml-[6px] mr-[8px] shrink-0">
			<svg width="15" height="15" viewBox="0 0 15 15" fill="none">
				<path d="M3 .7H12A2.3 2.3 0 0 1 14.3 3V12A2.3 2.3 0 0 1 12 14.3H3A2.3 2.3 0 0 1 .7 12V3A2.3 2.3 0 0 1 3 .7ZM.7 5.3H14.3M.7 9.7H14.3M5.3 .7V14.3M9.7 .7V14.3" stroke="#333" strokeWidth="1.2" />
			</svg>
			{active && (
				<div className="absolute left-[7px] top-[7px] w-[15px] h-[15px] rounded-full bg-[#117865] flex items-center justify-center">
					<svg width="8" height="7" viewBox="0 0 8 7" fill="none">
						<path d="M1 3.500L3 5.500L7 1" stroke="#fff" strokeWidth="1.5" />
					</svg>
				</div>
			)}
		</div>
		<span className="-translate-y-px">{name}</span>
	</div>
);

const DataPane = () => (
	<div className="flex-1 bg-[#f3f2f1] flex flex-col overflow-hidden">
		<div className="h-[58px] flex items-center justify-between pl-[11px] pr-[9px] pb-[6px]">
			<div className="text-[18.5px] font-semibold text-[#252423]">Dados</div>
			<DoubleChevron />
		</div>
		<div className="ml-[6px] mr-[4px] h-[29px] bg-white border border-[#c8c6c4] rounded-[4px] flex items-center pl-[15px]">
			<svg width="17" height="17" viewBox="0 0 17 17" fill="none">
				<circle cx="7" cy="7" r="5.700" stroke="#555" strokeWidth="1.2" />
				<path d="M11 11L16 16" stroke="#555" strokeWidth="1.2" />
			</svg>
			<div className="ml-[9px] pt-[2px] text-[15.5px] text-[#605e5c]">Pesquisar</div>
		</div>
		<div className="mt-[13px]">
			<div className="relative">
				<TableRow name="olist_itens_pedidos" open active />
				<FieldRow label="Data limite entr..." />
				<FieldRow label="Id item pedido" />
				<FieldRow label="Id pedido" checked />
				<div className="absolute -top-[5px] bottom-[-1px] left-[9px] -right-[4px] border-[4px] border-[#ff0000] rounded-[2px]" />
			</div>
			<FieldRow label="Id produto" />
			<FieldRow label="Preço" sigma />
			<FieldRow label="Valor frete" sigma />
			<div className="relative">
				<TableRow name="olist_pagamentos" open active />
				<FieldRow label="id_pedidos" />
				<FieldRow label="payment_install..." sigma />
				<FieldRow label="payment_seque..." sigma />
				<FieldRow label="payment_type" />
				<FieldRow label="payment_value" sigma />
				<FieldRow label="Tipos de Paga..." checked />
				<div className="absolute -top-[12px] bottom-[2px] left-[11px] right-[5px] border-[4px] border-[#ff0000] rounded-[2px]" />
			</div>
			<TableRow name="olist_pedidos" />
			<TableRow name="olist_produtos" />
		</div>
	</div>
);

export default function App() {
	return (
		<div className="w-[1893px] h-[730px] flex flex-col overflow-hidden bg-white font-['Noto_Sans',sans-serif]">
			<Ribbon />
			<div className="flex flex-1 min-h-0">
				<Rail />
				<Canvas />
				<FiltersPane />
				<VizPane />
				<DataPane />
			</div>
		</div>
	);
}
